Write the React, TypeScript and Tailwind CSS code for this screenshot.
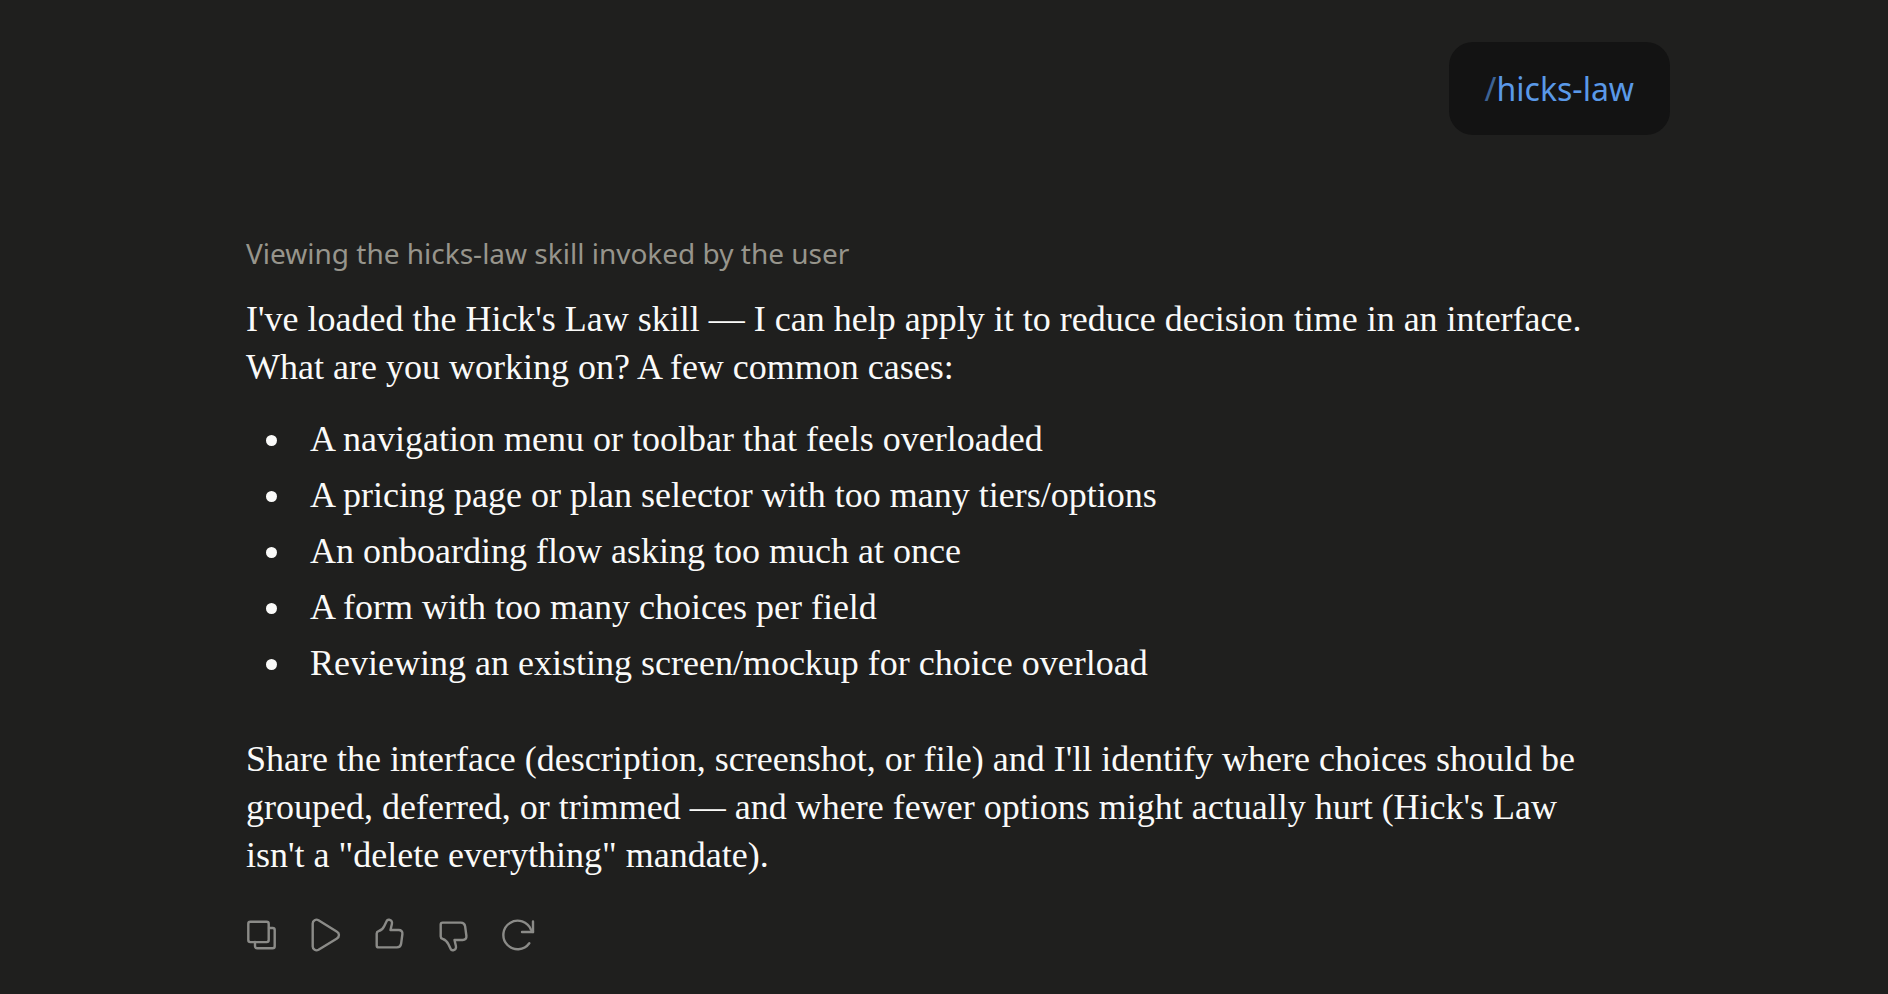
import { ReactNode } from "react";

const cases = [
  "A navigation menu or toolbar that feels overloaded",
  "A pricing page or plan selector with too many tiers/options",
  "An onboarding flow asking too much at once",
  "A form with too many choices per field",
  "Reviewing an existing screen/mockup for choice overload",
];

const thumbPath =
  "M6.7 18.6c0-1.3.7-2.1 1.9-2.5 3.2-1 4.5-2.6 5.7-5.2l2.4-5c.5-1.1 1.4-1.3 2.5-1.1 2.2.4 3.2 2 2.7 4.2l-1.4 6h8.2c2.5 0 4 1.6 3.7 4l-1.3 9.8c-.4 2.5-1.9 3.6-4.2 3.6H8.7a2 2 0 0 1-2-2Z";

const actions: { label: string; icon: ReactNode }[] = [
  {
    label: "Copy",
    icon: (
      <>
        <rect x="6.3" y="6.7" width="20.4" height="20.4" rx="2" />
        <path d="M27 13h3.7a2 2 0 0 1 2 2v16.3a2 2 0 0 1-2 2H15a2 2 0 0 1-2-2V27" />
      </>
    ),
  },
  {
    label: "Read aloud",
    icon: <path d="M6.7 8.6c0-3 3.2-4.9 5.8-3.4L31 16.7c2.6 1.5 2.6 5.2 0 6.7L12.5 34.8c-2.6 1.5-5.8-.4-5.8-3.4Z" />,
  },
  { label: "Good response", icon: <path d={thumbPath} /> },
  {
    label: "Bad response",
    icon: <path d={thumbPath} transform="matrix(1 0 0 -1 0 40)" />,
  },
  {
    label: "Retry",
    icon: (
      <>
        <path d="M31.3 28.3A14.3 14.3 0 1 1 33 14.8L35 17" />
        <path d="M35 6.4V17H24" />
      </>
    ),
  },
];

function UserMessage({ command }: { command: string }) {
  return (
    <div className="flex justify-end">
      <div className="rounded-3xl bg-[#131313] px-9 py-6 font-['Noto_Sans',sans-serif] text-[32px] leading-[45px] text-[#5a99e8]">
        <span className="opacity-60">/</span>
        {command}
      </div>
    </div>
  );
}

function MessageActions() {
  return (
    <div className="-ml-4 flex">
      {actions.map(({ label, icon }) => (
        <button
          key={label}
          type="button"
          aria-label={label}
          className="flex size-16 items-center justify-center rounded-xl text-[#8b8b88] hover:bg-white/5 hover:text-white"
        >
          <svg
            viewBox="0 0 40 40"
            className="size-10"
            fill="none"
            stroke="currentColor"
            strokeWidth="2.4"
            strokeLinecap="round"
            strokeLinejoin="round"
            aria-hidden="true"
          >
            {icon}
          </svg>
        </button>
      ))}
    </div>
  );
}

export default function App() {
  return (
    <main className="min-h-screen bg-[#1f1f1e] px-6 pt-[42px]">
      <div className="mx-auto max-w-[1452px]">
        <UserMessage command="hicks-law" />

        <article className="mt-[98px] pr-12 pl-7">
          <p className="font-['Noto_Sans',sans-serif] text-[28px] leading-10 text-[#97958c]">
            Viewing the hicks-law skill invoked by the user
          </p>

          <div className="mt-[22px] font-['Liberation_Serif',serif] text-4xl leading-12 text-[#fafaf9]">
            <p>
              I've loaded the Hick's Law skill — I can help apply it to reduce decision time in an interface. What are
              you working on? A few common cases:
            </p>

            <ul className="mt-6 list-disc space-y-2 pl-12">
              {cases.map((item) => (
                <li key={item} className="pl-4">
                  {item}
                </li>
              ))}
            </ul>

            <p className="mt-12">
              Share the interface (description, screenshot, or file) and I'll identify where choices should be grouped,
              deferred, or trimmed — and where fewer options might actually hurt (Hick's Law isn't a "delete
              everything" mandate).
            </p>
          </div>

          <div className="mt-6">
            <MessageActions />
          </div>
        </article>
      </div>
    </main>
  );
}
